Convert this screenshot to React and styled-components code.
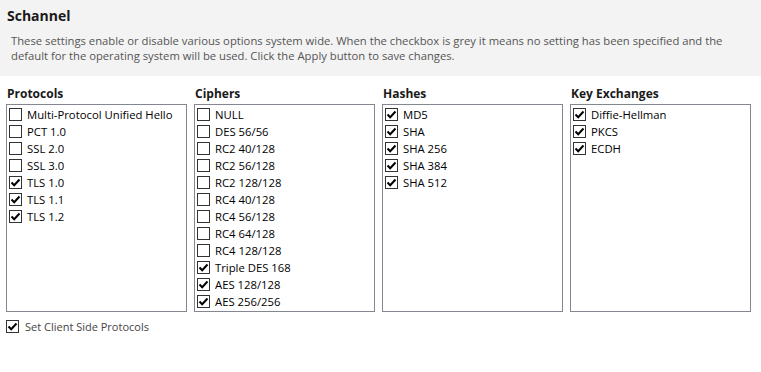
import styled, { createGlobalStyle } from "styled-components";

const Global = createGlobalStyle`
  html, body { margin: 0; padding: 0; background: #fff; }
  body { font-family: "Open Sans", "Noto Sans", sans-serif; color: #000; }
`;

const groups = [
  {
    title: "Protocols",
    items: [
      ["Multi-Protocol Unified Hello", false],
      ["PCT 1.0", false],
      ["SSL 2.0", false],
      ["SSL 3.0", false],
      ["TLS 1.0", true],
      ["TLS 1.1", true],
      ["TLS 1.2", true],
    ],
  },
  {
    title: "Ciphers",
    items: [
      ["NULL", false],
      ["DES 56/56", false],
      ["RC2 40/128", false],
      ["RC2 56/128", false],
      ["RC2 128/128", false],
      ["RC4 40/128", false],
      ["RC4 56/128", false],
      ["RC4 64/128", false],
      ["RC4 128/128", false],
      ["Triple DES 168", true],
      ["AES 128/128", true],
      ["AES 256/256", true],
    ],
  },
  {
    title: "Hashes",
    items: [
      ["MD5", true],
      ["SHA", true],
      ["SHA 256", true],
      ["SHA 384", true],
      ["SHA 512", true],
    ],
  },
  {
    title: "Key Exchanges",
    items: [
      ["Diffie-Hellman", true],
      ["PKCS", true],
      ["ECDH", true],
    ],
  },
];

function Check({ checked }) {
  return (
    <Box>
      {checked && (
        <svg width="11" height="11" viewBox="0 0 11 11">
          <path d="M1.5 5.5 L4.2 8.2 L9.5 2.5" fill="none" stroke="#000" strokeWidth="2" />
        </svg>
      )}
    </Box>
  );
}

export default function App() {
  return (
    <Page>
      <Global />
      <Header>
        <Title>Schannel</Title>
        <Desc>
          These settings enable or disable various options system wide. When the checkbox is grey it means no setting has been specified and the
          default for the operating system will be used. Click the Apply button to save changes.
        </Desc>
      </Header>
      <Columns>
        {groups.map((g) => (
          <Group key={g.title}>
            <GroupTitle>{g.title}</GroupTitle>
            <List>
              {g.items.map(([label, checked]) => (
                <Item key={label}>
                  <Check checked={checked} />
                  <span>{label}</span>
                </Item>
              ))}
            </List>
          </Group>
        ))}
      </Columns>
      <Footer>
        <Check checked />
        <span>Set Client Side Protocols</span>
      </Footer>
    </Page>
  );
}

const Page = styled.div`
  width: 761px;
  height: 372px;
  background: #fff;
`;

const Header = styled.div`
  background: #f3f3f3;
  height: 76px;
  box-sizing: border-box;
  padding: 6px 8px 0 7px;
`;

const Title = styled.div`
  font-size: 14px;
  font-weight: 700;
  color: #1a1a1a;
  line-height: 20px;
`;

const Desc = styled.div`
  margin-top: 7px;
  padding-left: 4px;
  font-size: 11.25px;
  line-height: 15px;
  color: #555;
`;

const Columns = styled.div`
  display: grid;
  grid-template-columns: repeat(4, 1fr);
  gap: 7px;
  padding: 8px 10px 0 6px;
`;

const Group = styled.div`
  display: flex;
  flex-direction: column;
`;

const GroupTitle = styled.div`
  font-size: 12px;
  font-weight: 700;
  color: #1a1a1a;
  line-height: 20px;
  margin-left: 1px;
`;

const List = styled.div`
  border: 1px solid #828790;
  height: 208px;
  box-sizing: border-box;
  padding: 1px 2px;
  background: #fff;
`;

const Item = styled.div`
  display: flex;
  align-items: center;
  gap: 5px;
  height: 17px;
  font-size: 11.3px;
  color: #000;
  white-space: nowrap;
`;

const Box = styled.span`
  width: 13px;
  height: 13px;
  box-sizing: border-box;
  border: 1px solid #333;
  background: #fff;
  display: inline-flex;
  align-items: center;
  justify-content: center;
  flex: none;
`;

const Footer = styled.div`
  display: flex;
  align-items: center;
  gap: 6px;
  padding: 7px 0 0 6px;
  font-size: 11px;
  color: #444;
`;
